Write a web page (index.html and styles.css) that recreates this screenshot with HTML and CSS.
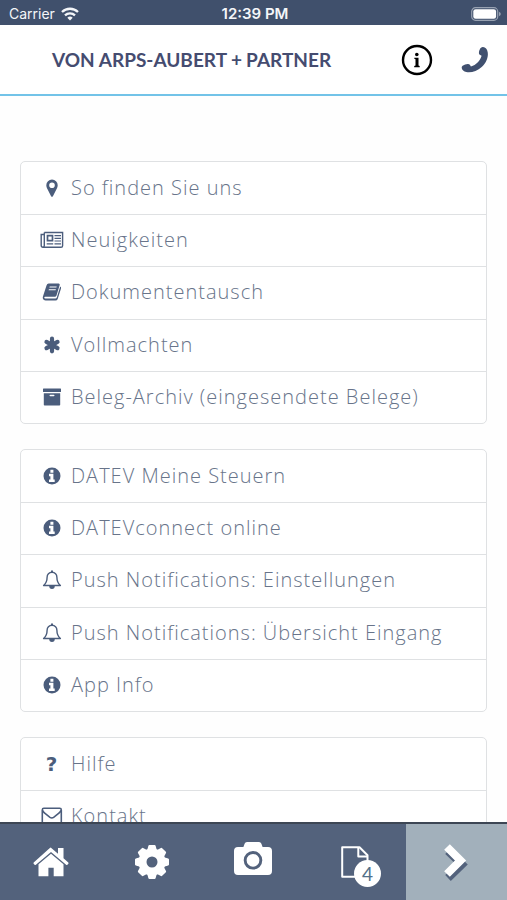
FILE: index.html
```html
<!DOCTYPE html>
<html lang="de">
<head>
<meta charset="utf-8">
<meta name="viewport" content="width=device-width, initial-scale=1">
<title>von Arps-Aubert + Partner</title>
<link rel="stylesheet" href="styles.css">
</head>
<body>
<svg class="defs" aria-hidden="true">
  <symbol id="info" viewBox="0 0 18 18">
    <path fill-rule="evenodd" d="M9 .5a8.500 8.500 0 1 0 0 17a8.500 8.500 0 1 0 0-17zM7.400 2.800h3v2.900h-3zM6 6.800h4.400v5.700h1.300v2.500H6v-2.500h1.400V9.300H6z"/>
  </symbol>
  <symbol id="bell" viewBox="0 0 20 20">
    <path d="M10 2.300c-3 0-4.900 2.200-4.900 5 0 4.300-1.500 6.500-3.500 8.200h16.800c-2-1.700-3.500-3.900-3.500-8.200 0-2.800-1.900-5-4.900-5z" fill="none" stroke="currentColor" stroke-width="1.400" stroke-linejoin="round"/>
    <path d="M9 .6h2v2H9zM7.200 16h5.600a2.800 3 0 0 1-5.600 0z"/>
  </symbol>
  <symbol id="teeth" viewBox="-18 -18 36 36">
    <path d="M-4.800-12l1.200-4.200q.3-.8 1-.8h5.200q.7 0 1 .8L4.800-12zM-4.800 12l1.200 4.200q.3.800 1 .8h5.200q.7 0 1-.8L4.800 12z"/>
  </symbol>
</svg>

<div class="status">
  <span class="carrier">Carrier
    <svg width="18" height="14" viewBox="0 0 18 14" fill="none" stroke="currentColor" stroke-width="2.300" aria-hidden="true"><path d="M1 5a11.500 11.500 0 0 1 16 0M4 8.300a7.200 7.200 0 0 1 10 0"/><path d="M9 13.500L6.300 10.700a3.900 3.900 0 0 1 5.400 0z" fill="currentColor" stroke="none"/></svg>
  </span>
  <span class="time">12:39 PM</span>
  <span class="battery"><svg width="30" height="14" viewBox="0 0 30 14" aria-hidden="true"><rect x=".7" y=".7" width="26" height="12.600" rx="3.800" fill="none" stroke="#98a2b2" stroke-width="1.200"/><rect x="2.300" y="2.300" width="22.800" height="9.400" rx="2.300" fill="#fff"/><path d="M28 4.700q1.800.8 1.800 2.300T28 9.300z" fill="#98a2b2"/></svg></span>
</div>

<header class="header">
  <h1>VON ARPS-AUBERT<span class="plus">+</span>PARTNER</h1>
  <button class="tool info-button" aria-label="Information">
    <svg width="32" height="32" viewBox="0 0 32 32" aria-hidden="true"><circle cx="16" cy="16" r="14" fill="none" stroke="currentColor" stroke-width="2.400"/><circle cx="15.800" cy="10.500" r="1.800"/><path d="M13.300 13.800h4.200v7.700l1.200.6v1.100h-5.500v-1.100l1.300-.6v-6.300l-1.200-.5z"/></svg>
  </button>
  <button class="tool" aria-label="Anrufen">
    <svg width="28" height="28" viewBox="0 0 28 28" aria-hidden="true"><path d="M19.200 2.600Q20.300.9 22 1.100q3.800.4 4.700 5.100c.9 5-1.600 10.800-6 14.700-4.600 4.200-10.800 6.200-15.400 5.100Q1.400 25 .7 22q-.2-1.500.9-2.200 2.400-1.500 5.200-1.700 1.700 0 2.400 1.200l.7 1.200c2.800-.7 4.700-2 6.700-3.900 2-2.100 3.400-4.200 4-6.800l-1.400-.7q-1.400-.6-1.300-2.200.2-2.300 1.300-4.300z"/></svg>
  </button>
</header>

<main class="content">
  <nav class="card full" aria-label="Kanzlei">
    <a href="#finden"><span class="icon"><svg width="20" height="20" viewBox="0 0 20 20"><path fill-rule="evenodd" d="M10 1.500a5.700 5.700 0 0 0-5.700 5.700c0 1.200.3 2 .6 2.700l4.200 8.300q.9 1.200 1.800 0l4.200-8.300c.3-.7.6-1.500.6-2.700A5.700 5.700 0 0 0 10 1.500zm0 2.900a2.800 2.800 0 1 1 0 5.600a2.800 2.800 0 1 1 0-5.600z"/></svg></span>So finden Sie uns</a>
    <a href="#news"><span class="icon"><svg width="24" height="18" viewBox="0 0 24 18" fill="none" stroke="currentColor" stroke-width="1.400"><path d="M4.300 1.500h18.300v13.200q0 1.600-1.600 1.600H3q-1.800 0-1.800-1.800V3.500h3M4.300 1.500v13q0 1.500-1.300 1.800"/><path d="M7.500 4.700h5v5h-5z" stroke-width="1.700"/><path d="M14.500 4.600H21M14.500 7.300H21M14.500 10H21M6.700 12.800h6.500M14.500 12.800H21" stroke-width="1.200"/></svg></span>Neuigkeiten</a>
    <a href="#dokumente"><span class="icon"><svg width="20" height="20" viewBox="0 0 20 20"><path fill-rule="evenodd" d="M6.700 1.500h10q1.300.1 1 1.500l-3.200 10.600q-.4 1.200-1.800 1.200H3.200q-1 0-.9.900t1.300.8h9.700q1.200 0 1.600-1.200L18.200 4.600q1.200.7.800 2L15.700 17q-.6 1.500-2.200 1.500H3.600Q1.600 18.500.9 16.700q-.4-1.200.2-2.600L4.500 3.500q.6-1.900 2.200-2zM7.700 4.600l-.3 1h7l.3-1zM6.900 7.200l-.3 1h7l.3-1z"/></svg></span>Dokumententausch</a>
    <a href="#vollmachten"><span class="icon"><svg width="20" height="20" viewBox="0 0 20 20" stroke="currentColor" stroke-width="4.200" stroke-linecap="round"><path d="M10 3.700v12.600M4.500 6.900l11 6.200M15.500 6.900l-11 6.200"/></svg></span>Vollmachten</a>
    <a href="#archiv"><span class="icon"><svg width="20" height="20" viewBox="0 0 20 20"><path fill-rule="evenodd" d="M1.500 1.500h17q.5 0 .5.500v3H1V2q0-.5.500-.5zM1.800 6.200h16.400v11.500q0 .8-.8.800H2.600q-.8 0-.8-.8zM8.300 7.800q-.8 0-.8.700t.8.700h3.400q.8 0 .8-.7t-.8-.7z"/></svg></span>Beleg-Archiv (eingesendete Belege)</a>
  </nav>

  <nav class="card full" aria-label="Dienste">
    <a href="#steuern"><span class="icon"><svg width="18" height="18"><use href="#info"/></svg></span>DATEV Meine Steuern</a>
    <a href="#connect"><span class="icon"><svg width="18" height="18"><use href="#info"/></svg></span>DATEVconnect online</a>
    <a href="#push"><span class="icon"><svg width="20" height="20"><use href="#bell"/></svg></span>Push Notifications: Einstellungen</a>
    <a href="#eingang"><span class="icon"><svg width="20" height="20"><use href="#bell"/></svg></span>Push Notifications: Übersicht Eingang</a>
    <a href="#app"><span class="icon"><svg width="18" height="18"><use href="#info"/></svg></span>App Info</a>
  </nav>

  <nav class="card" aria-label="Unterstützung">
    <a href="#hilfe"><span class="icon question" aria-hidden="true">?</span>Hilfe</a>
    <a href="#kontakt"><span class="icon"><svg width="22" height="18" viewBox="0 0 22 18" fill="none" stroke="currentColor" stroke-width="1.600"><rect x="1.300" y="1.300" width="19" height="15" rx="1.600"/><path d="M1.500 3.500q1 1.700 2.500 2.900l5 4q1.800 1.300 3.600 0l5-4q1.500-1.200 2.500-2.900"/></svg></span>Kontakt</a>
  </nav>
</main>

<nav class="tabs" aria-label="Hauptnavigation">
  <a href="#home" aria-label="Start"><svg width="36" height="30" viewBox="0 0 36 30"><path d="M18 .8l7 5.900V1h5.500v10.300l4.800 4.100q.6.700 0 1.300l-.9 1.100q-.7.600-1.300 0L18 5 2.900 17.800q-.7.600-1.300 0l-.9-1.100q-.6-.7 0-1.300L16.300 1.500q1.700-1.300 1.700-.7z"/><path d="M18 6.800l12.500 10.500v12H20.700v-8.500h-5.300v8.500H5.500v-12z"/></svg></a>
  <a href="#settings" aria-label="Einstellungen"><svg width="36" height="36" viewBox="-18 -18 36 36"><use href="#teeth" x="-18" y="-18" width="36" height="36"/><use href="#teeth" x="-18" y="-18" width="36" height="36" transform="rotate(45)"/><use href="#teeth" x="-18" y="-18" width="36" height="36" transform="rotate(90)"/><use href="#teeth" x="-18" y="-18" width="36" height="36" transform="rotate(135)"/><circle r="9.500" fill="none" stroke="currentColor" stroke-width="8"/></svg></a>
  <a href="#camera" class="camera" aria-label="Beleg fotografieren"><svg width="40" height="36" viewBox="0 0 40 36"><path fill-rule="evenodd" d="M14 1h12q1.800 0 2.400 1.700l1.200 3.200H35q4 0 4 4V30q0 4-4 4H5q-4 0-4-4V9.900q0-4 4-4h5.400l1.200-3.200Q12.200 1 14 1zM20 10a9.300 9.300 0 1 0 0 18.600A9.300 9.300 0 1 0 20 10zm0 2.900a6.400 6.400 0 1 1 0 12.800 6.400 6.400 0 1 1 0-12.800z"/></svg></a>
  <a href="#documents" aria-label="Dokumente, 4"><span class="stack"><svg width="30" height="34" viewBox="0 0 30 34" fill="none" stroke="currentColor" stroke-width="2" stroke-linejoin="round"><path d="M2.200 2.200h17.300l8 8v21.600H2.200z"/><path d="M18.300 2.200v9.200h9.200"/></svg><span class="badge">4</span></span></a>
  <a href="#next" class="next" aria-label="Weiter"><svg width="26" height="40" viewBox="0 0 26 40" fill="none" stroke-width="8"><path d="M5 9l14 13.500L5 36" stroke="#53627c"/><path d="M4 5l13.500 13.500L4 32" stroke="#fff"/></svg></a>
</nav>
</body>
</html>
```
FILE: styles.css
```css
* { box-sizing: border-box; }

body {
  margin: 0;
  height: 100vh;
  display: flex;
  flex-direction: column;
  background: #fefefe;
  color: #68748a;
  font-family: "Open Sans", Lato, sans-serif;
}

svg { display: block; fill: currentColor; flex: none; }
svg[fill="none"] { fill: none; }
a { color: inherit; text-decoration: none; }
.defs { position: absolute; width: 0; height: 0; }

.status {
  display: grid;
  grid-template-columns: 1fr auto 1fr;
  align-items: center;
  padding: 2px 6px 0 9px;
  height: 25px;
  background: #40506c;
  color: #f4f6f9;
  font: 14px/22px Inter, sans-serif;
}
.carrier { display: flex; align-items: center; gap: 6px; }
.time { font-size: 15px; font-weight: 600; }
.battery { justify-self: end; }

.header {
  display: flex;
  align-items: center;
  height: 71px;
  padding: 0 18px 0 52px;
  background: #fff;
  border-bottom: 2px solid #72c3e8;
  color: #454c70;
}
h1 {
  margin: 0;
  flex: 1;
  font: 700 19px/24px Lato, sans-serif;
  white-space: nowrap;
}
.plus { margin: 0 4px; }
.tool { padding: 0; border: 0; background: none; color: #40506f; }
.info-button { margin-right: 28px; color: #000; }

.content {
  flex: 1;
  min-height: 0;
  overflow-y: auto;
  scrollbar-width: none;
  padding: 65px 20px 25px;
}
.card {
  display: grid;
  grid-auto-rows: 1fr;
  margin-bottom: 25px;
  border: 1px solid #dfe1e3;
  border-radius: 5px;
  background: #fff;
}
.card.full { min-height: 263px; }
.card a {
  display: flex;
  align-items: center;
  gap: 7px;
  min-height: 52px;
  padding: 0 19px 1px;
  font-size: 20px;
  line-height: 24px;
  font-weight: 300;
  letter-spacing: 1px;
}
.card a + a { border-top: 1px solid #dfe1e3; }
.icon {
  display: flex;
  justify-content: center;
  flex: none;
  width: 24px;
  color: #4b5d7c;
}
.question { font: 900 20px/24px "DejaVu Sans", sans-serif; }

.tabs {
  display: grid;
  grid-template-columns: repeat(5, 1fr);
  height: 78px;
  flex: none;
  border-top: 2px solid #3d4654;
  background: #53627c;
  color: #fff;
}
.tabs a { display: flex; align-items: center; justify-content: center; }
.tabs .camera { padding-bottom: 6px; }
.tabs .next { background: #a2b0bb; }
.stack { position: relative; }
.badge {
  position: absolute;
  left: 14px;
  top: 15px;
  width: 27px;
  height: 27px;
  border-radius: 50%;
  background: #fff;
  color: #53718a;
  font: 19px/27px Lato, sans-serif;
  text-align: center;
}
```
